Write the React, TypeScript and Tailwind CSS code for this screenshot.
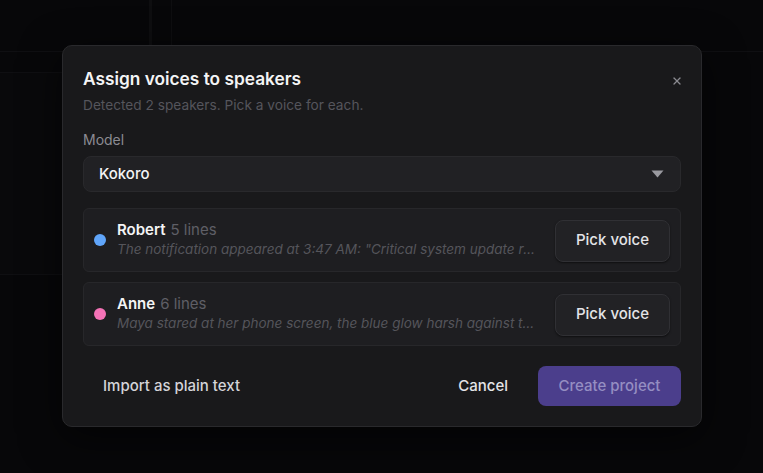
import { X } from "lucide-react";

const speakers = [
  {
    name: "Robert",
    lines: 5,
    color: "bg-[#60a5fa]",
    excerpt: "The notification appeared at 3:47 AM: \"Critical system update required before morning sync\"",
  },
  {
    name: "Anne",
    lines: 6,
    color: "bg-[#f472b6]",
    excerpt: "Maya stared at her phone screen, the blue glow harsh against the darkness of her bedroom",
  },
];

function SpeakerRow({ s }: { s: (typeof speakers)[number] }) {
  return (
    <div className="flex h-[64px] items-center gap-[11px] rounded-md border border-[#27272a] bg-[#1e1e21] pl-[10px] pr-[10px]">
      <span className={`h-[12px] w-[12px] shrink-0 rounded-full ${s.color}`} />
      <div className="-mt-[2px] min-w-0 flex-1">
        <div className="text-[15px] leading-[19px]">
          <span className="font-semibold text-[#f4f4f5]">{s.name}</span>
          <span className="ml-[5px] text-[#5f5f66]">{s.lines} lines</span>
        </div>
        <div className="mt-[1px] truncate text-[13.5px] italic leading-[18px] text-[#55555b]">{s.excerpt}</div>
      </div>
      <button className="ml-[4px] mt-[1px] h-[42px] w-[115px] shrink-0 rounded-lg border border-[#303034] bg-[#222225] text-[15px] font-medium text-[#e4e4e7] shadow-[0_1px_2px_rgba(0,0,0,0.5)]">
        Pick voice
      </button>
    </div>
  );
}

export default function App() {
  return (
    <div className="relative h-[473px] w-[763px] overflow-hidden bg-[#070709] font-['Inter','Liberation_Sans',sans-serif]">
      {/* app underneath the overlay */}
      <div className="flex h-[52px] border-b border-[#0f0f12]">
        <div className="w-[152px] border-r-[3px] border-[#0e0e10]" />
        <div className="w-[20px] border-r border-[#0e0e10]" />
        <div className="flex-1" />
      </div>
      <div className="flex h-[421px]">
        <div className="w-[62px]">
          <div className="mt-[20px] h-[203px] border-y border-[#0f0f12] bg-[#09090b]" />
        </div>
      </div>

      {/* dialog */}
      <div className="absolute left-[62px] top-[45px] w-[640px] rounded-[10px] border border-[#29292c] bg-[#19191b] px-[20px] pb-[20px] pt-[20px] shadow-[0_10px_40px_rgba(0,0,0,0.6)]">
        <div className="flex items-start justify-between">
          <h2 className="text-[17.3px] font-semibold leading-[26px] text-[#f4f4f5]">Assign voices to speakers</h2>
          <X className="mr-[-2px] mt-[9px] h-[12px] w-[12px] text-[#8a8a90]" strokeWidth={2.5} />
        </div>
        <p className="mt-[3px] text-[13.7px] leading-[20px] text-[#55555c]">Detected 2 speakers. Pick a voice for each.</p>

        <div className="mt-[15px] text-[14px] leading-[20px] text-[#8b8b92]">Model</div>
        <div className="mt-[6px] flex h-[36px] items-center justify-between rounded-lg border border-[#29292c] bg-[#212124] pl-[15px] pr-[16px]">
          <span className="text-[15px] font-medium text-[#f4f4f5]">Kokoro</span>
          <svg width="13" height="8" viewBox="0 0 13 8" className="text-[#9a9aa0]">
            <path d="M0.5 0.5 H12.5 L6.5 7.5 Z" fill="currentColor" />
          </svg>
        </div>

        <div className="mt-[16px] flex flex-col gap-[10px]">
          {speakers.map((s) => (
            <SpeakerRow key={s.name} s={s} />
          ))}
        </div>

        <div className="mt-[20px] flex items-center">
          <button className="h-[40px] px-[20px] text-[15px] font-medium text-[#d4d4d8]">Import as plain text</button>
          <div className="flex-1" />
          <button className="h-[40px] px-[20px] text-[15px] font-medium text-[#e4e4e7]">Cancel</button>
          <button className="ml-[10px] h-[40px] w-[143px] rounded-lg bg-[#4b3e8c] text-[15px] font-medium text-[#958ec2]">
            Create project
          </button>
        </div>
      </div>
    </div>
  );
}
